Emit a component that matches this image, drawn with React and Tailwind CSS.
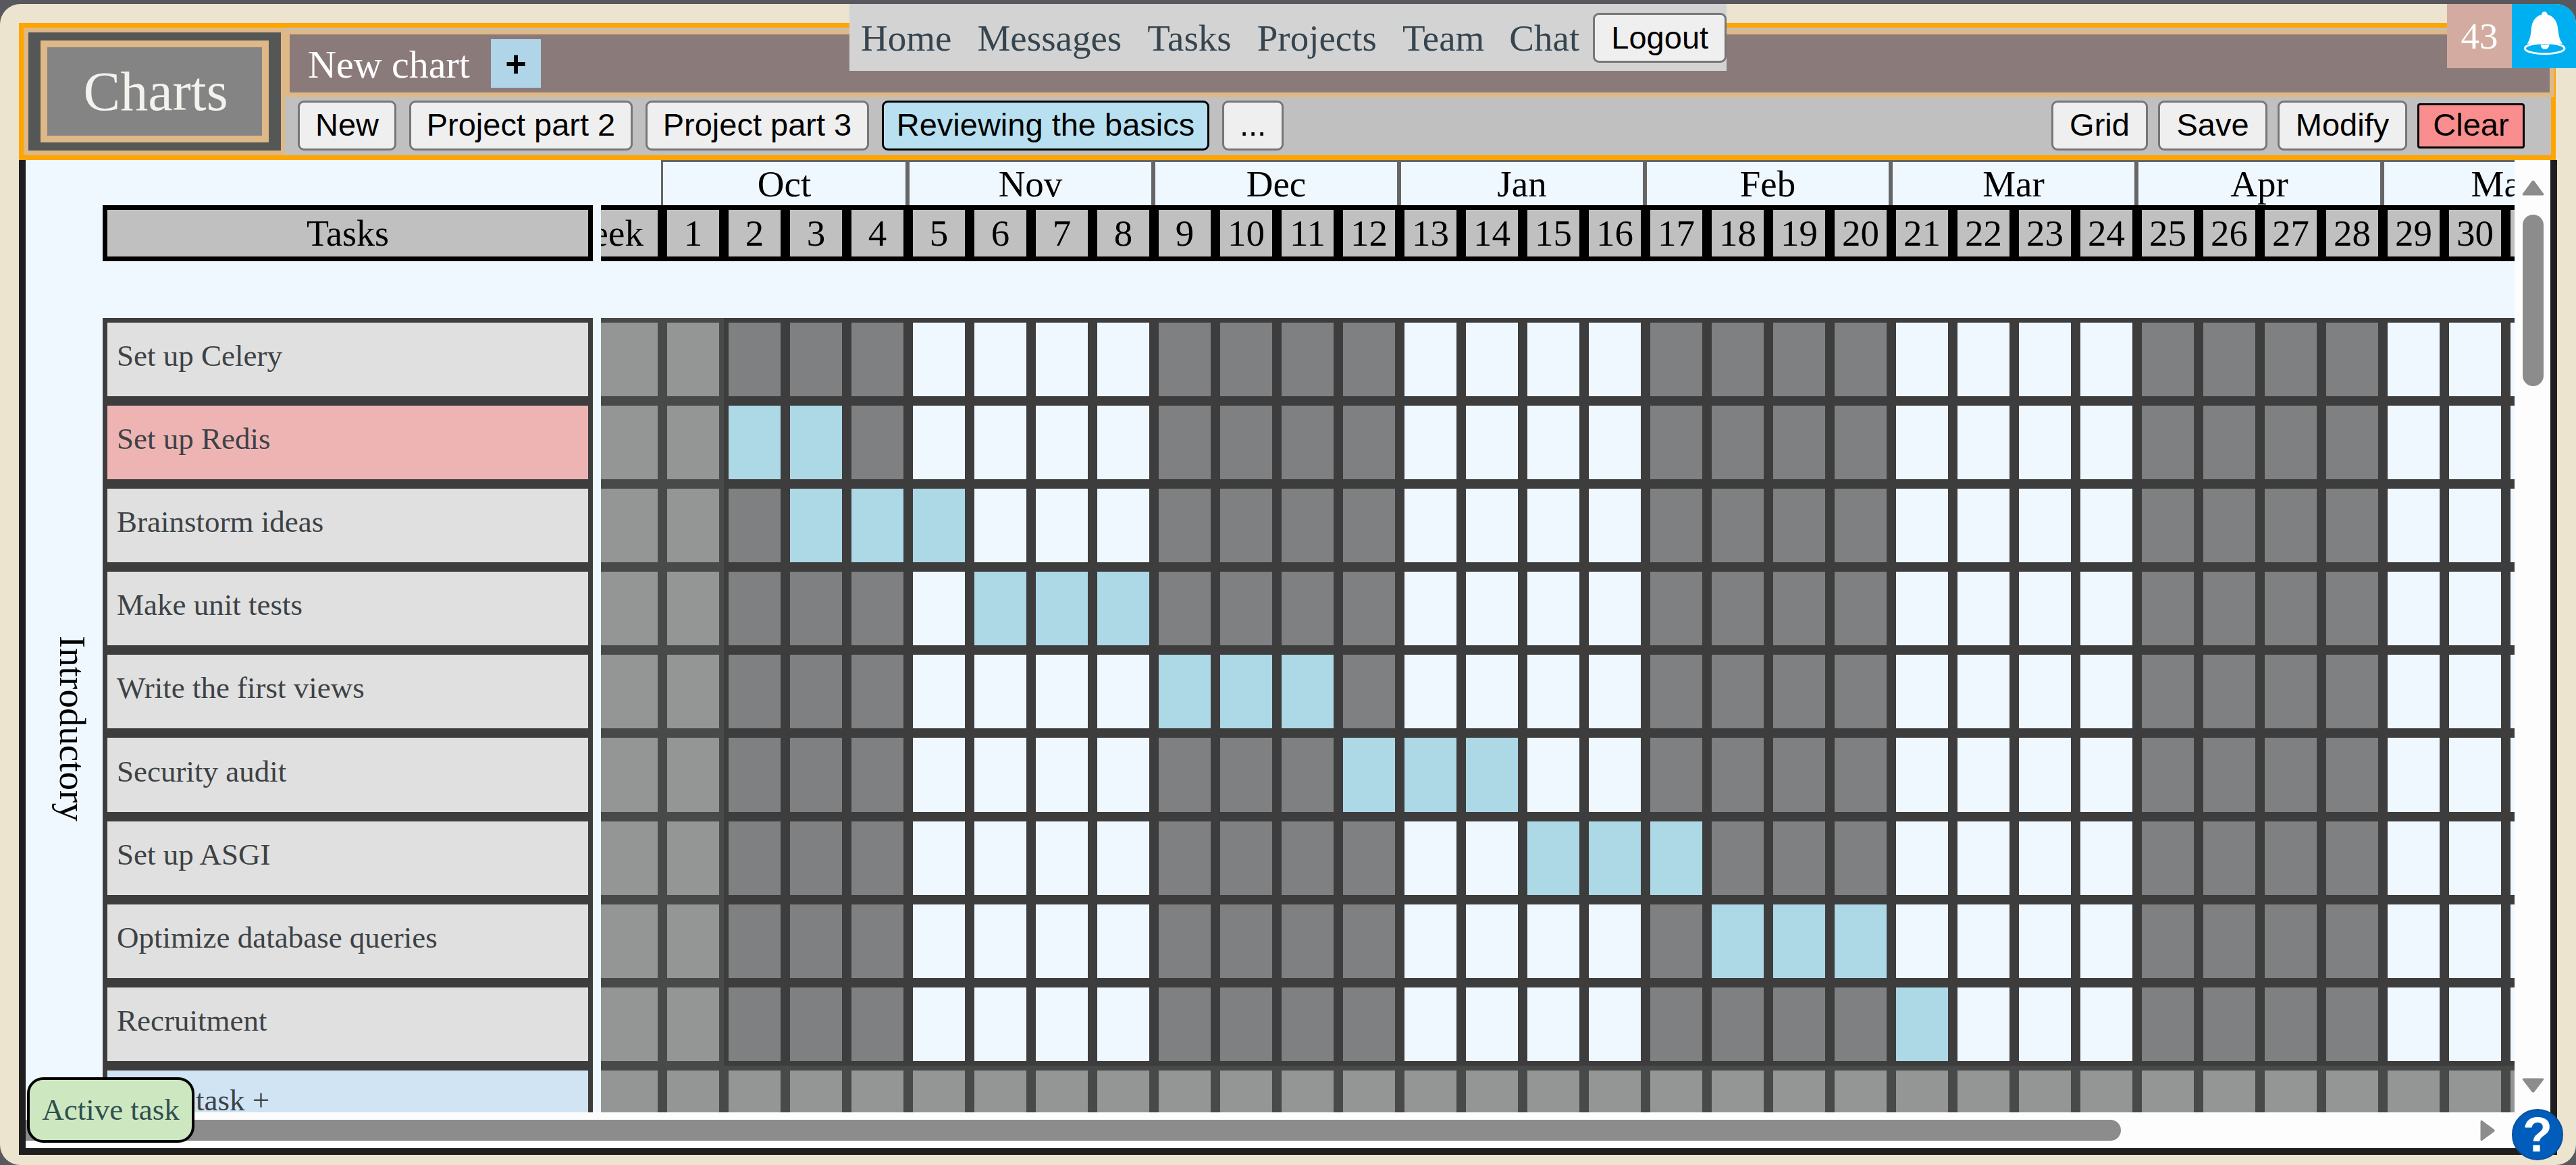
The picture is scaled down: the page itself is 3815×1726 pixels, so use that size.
const serif = "font-['Liberation_Serif',serif]";
const sans = "font-['Liberation_Sans',sans-serif]";

const months = ["Nov", "Dec", "Jan", "Feb", "Mar", "Apr", "May"];
const weeks = Array.from({ length: 31 }, (_, i) => i + 1);

const tasks = [
  { name: "Set up Celery", from: 0, to: -1 },
  { name: "Set up Redis", from: 2, to: 3, warn: true },
  { name: "Brainstorm ideas", from: 3, to: 5 },
  { name: "Make unit tests", from: 6, to: 8 },
  { name: "Write the first views", from: 9, to: 11 },
  { name: "Security audit", from: 12, to: 14 },
  { name: "Set up ASGI", from: 15, to: 17 },
  { name: "Optimize database queries", from: 18, to: 20 },
  { name: "Recruitment", from: 21, to: 21 },
];

const btnVariants = {
  plain: "h-[74px] rounded-[9px] border-[#767676] bg-[#efefef]",
  active: "h-[74px] rounded-[9px] border-black bg-[#b9e0f0]",
  danger: "h-[67px] rounded-[4px] border-black bg-[#fa8e8e]",
};

function cellClass(week, task) {
  if (week >= task.from && week <= task.to) return "bg-[#add8e6] border-[#3d3d3d]";
  if (week <= 1) return "bg-[#949595] border-[#484a49]";
  const block = Math.floor((week - 1) / 4) % 2;
  return block === 0 ? "bg-[#7f8081] border-[#3d3d3d]" : "bg-[#f0f8ff] border-[#3d3d3d]";
}

function Btn({ children, variant = "plain", className = "" }) {
  return (
    <button
      type="button"
      className={`shrink-0 border-[3.5px] pb-[3px] text-[47px] leading-none text-black ${sans} ${btnVariants[variant]} ${className}`}
    >
      {children}
    </button>
  );
}

function Arrow({ points, className }) {
  return (
    <svg viewBox="0 0 24 24" preserveAspectRatio="none" className={className}>
      <polygon points={points} fill="#8c8c8c" stroke="#8c8c8c" strokeWidth="3" strokeLinejoin="round" />
    </svg>
  );
}

function Header() {
  return (
    <header className="flex h-[203px] w-[3757px] shrink-0 border-y-[7px] border-l-[7px] border-r-[7px] border-[#ffa500] bg-[#c0c0c0]">
      <div className="w-[387px] shrink-0 bg-[#deb887] p-[7px]">
        <div className="h-[175px] w-[374px] bg-[#555756] px-[18px] py-[12px]">
          <div className={`flex h-[151px] w-[338px] items-center justify-center border-[10px] border-[#deb887] bg-[#858484] pl-[3px] text-[82px] leading-none text-[#f3f2ee] ${serif}`}>
            Charts
          </div>
        </div>
      </div>
      <div className="flex min-w-0 flex-1 flex-col pt-[3px]">
        <div className="-mr-[5px] flex h-[100px] items-center border-[7px] border-[#deb887] bg-[#8b7a7a] pl-[27px]">
          <span className={`pt-[3px] text-[58px] leading-none text-white ${serif}`}>New chart</span>
          <span className={`ml-[31px] flex h-[72px] w-[74px] items-center justify-center bg-[#b0d4e8] text-[54px] font-bold leading-none text-black ${sans}`}>+</span>
        </div>
        <div className="flex flex-1 items-center justify-between pb-[2px] pl-[19px] pr-[39px]">
          <div className="flex gap-[19px]">
            <Btn className="w-[146px]">New</Btn>
            <Btn className="w-[331px]">Project part 2</Btn>
            <Btn className="w-[331px]">Project part 3</Btn>
            <Btn variant="active" className="w-[485px]">Reviewing the basics</Btn>
            <Btn className="w-[91px]">...</Btn>
          </div>
          <div className="flex items-center gap-[15px]">
            <Btn className="w-[143px]">Grid</Btn>
            <Btn className="w-[162px]">Save</Btn>
            <Btn className="w-[192px]">Modify</Btn>
            <Btn variant="danger" className="w-[159px]">Clear</Btn>
          </div>
        </div>
      </div>
    </header>
  );
}

function TaskColumn() {
  return (
    <div className="w-[726px] shrink-0 pt-[67px]">
      <div className={`flex h-[83px] items-center justify-center border-[7px] border-black bg-[#c0c0c0] text-[54px] leading-none text-black ${serif}`}>
        Tasks
      </div>
      <div className="mt-[84px] flex flex-col">
        {tasks.map((task) => (
          <div
            key={task.name}
            className={`flex h-[123.1px] shrink-0 items-center border-[7px] border-[#3d3d3d] pb-[10px] pl-[14px] text-[45px] leading-none text-[#3d4245] ${serif} ${task.warn ? "bg-[#eeb4b4]" : "bg-[#e0e0e0]"}`}
          >
            {task.name}
          </div>
        ))}
        <div className={`flex h-[123.1px] shrink-0 items-center border-[7px] border-[#3d3d3d] bg-[#d0e4f4] pb-[20px] pl-[11px] text-[45px] leading-none text-[#3d4245] ${serif}`}>
          Add a task +
        </div>
      </div>
    </div>
  );
}

function GridArea() {
  return (
    <div className="ml-[12px] min-w-0 flex-1 overflow-hidden">
      <div className={`flex h-[67px] w-max pl-[89px] text-[55px] leading-none text-black ${serif}`}>
        <div className="flex h-[67px] w-[362px] shrink-0 items-center justify-center border-l-[3px] border-t-[3px] border-[#666666]">Oct</div>
        {months.map((month) => (
          <div
            key={month}
            className="flex h-[67px] w-[364px] shrink-0 items-center justify-center border-l-[6px] border-t-[3px] border-[#666666]"
          >
            {month}
          </div>
        ))}
      </div>
      <div className={`-ml-[95px] flex h-[83px] w-max text-[55px] leading-none text-black ${serif}`}>
        <div className="flex h-[83px] w-[186px] shrink-0 items-center justify-center border-[7px] border-black bg-[#c0c0c0] pl-[6px]">Week</div>
        {weeks.map((week) => (
          <div key={week} className="flex h-[83px] w-[91px] shrink-0 items-center justify-center border-[7px] border-black bg-[#c0c0c0]">
            {week}
          </div>
        ))}
      </div>
      <div className="mt-[84px] flex w-max -translate-x-[95px] flex-col">
        {tasks.map((task) => (
          <div key={task.name} className="flex h-[123.1px]">
            <div className={`w-[186px] shrink-0 border-[7px] ${cellClass(0, task)}`} />
            {weeks.map((week) => (
              <div key={week} className={`w-[91px] shrink-0 border-[7px] ${cellClass(week, task)}`} />
            ))}
          </div>
        ))}
        <div className="flex h-[123.1px]">
          <div className="w-[186px] shrink-0 border-[7px] border-[#484a49] bg-[#949595]" />
          {weeks.map((week) => (
            <div key={week} className="w-[91px] shrink-0 border-[7px] border-[#484a49] bg-[#949595]" />
          ))}
        </div>
      </div>
    </div>
  );
}

function Nav() {
  return (
    <nav className={`absolute left-[1258px] top-[6px] flex h-[99px] w-[1299px] items-center gap-[38px] bg-[#d3d3d3] pl-[17px] text-[55px] leading-none text-[#36454f] ${serif}`}>
      <span className="pt-[2px]">Home</span>
      <span className="pt-[2px]">Messages</span>
      <span className="pt-[2px]">Tasks</span>
      <span className="pt-[2px]">Projects</span>
      <span className="pt-[2px]">Team</span>
      <span className="-ml-[1px] pt-[2px]">Chat</span>
      <button
        type="button"
        className={`-ml-[18px] h-[74px] w-[198px] shrink-0 rounded-[9px] border-[3.5px] border-[#767676] bg-[#efefef] text-[47px] leading-none text-black ${sans}`}
      >
        Logout
      </button>
    </nav>
  );
}

function Notifications() {
  return (
    <div className="absolute right-0 top-[6px] flex h-[95px]">
      <div className={`flex w-[96px] items-center justify-center bg-[#d3aba0] text-[55px] leading-none text-white ${serif}`}>43</div>
      <div className="w-[95px] rounded-tr-[30px] bg-[#00afef]">
        <svg viewBox="660 18 285 285" className="h-[95px] w-[95px]">
          <path
            d="M805 52C797 52 793 58 792 65C766 72 751 92 747 122C744 150 744 170 728 194L885 194C868 170 868 150 864 122C860 92 845 72 819 65C817 58 813 52 805 52Z"
            fill="#fff"
          />
          <ellipse cx="806" cy="215" rx="88" ry="24" fill="#00afef" stroke="#fff" strokeWidth="9" />
          <path d="M788 198L826 198C826 212 816 219 807 219C798 219 788 212 788 198Z" fill="#fff" />
        </svg>
      </div>
    </div>
  );
}

export default function App() {
  return (
    <div className="relative h-[1726px] w-[3815px] overflow-hidden bg-[#58595e] pt-[6px]">
      <div className="flex h-[1720px] w-[3815px] flex-col rounded-[30px] bg-[#ece4cf] pl-[28px] pt-[28px]">
        <Header />
        <main className="flex h-[1474px] w-[3759px] shrink-0 flex-col border-x-[10px] border-b-[10px] border-[#1f1f1f]">
          <div className="flex h-[1411px] shrink-0">
            <div className="relative flex w-[3686px] shrink-0 overflow-hidden bg-[#f0f8ff]">
              <div className="flex w-[114px] shrink-0 items-center justify-center pl-[24px] pt-[274px]">
                <span className={`text-[55px] leading-none text-black [writing-mode:vertical-rl] ${serif}`}>Introductory</span>
              </div>
              <TaskColumn />
              <GridArea />
            </div>
            <div className="flex w-[53px] shrink-0 flex-col items-center bg-[#fdfdfd] pl-[1px] pt-[29px]">
              <Arrow points="12,3 22,21 2,21" className="h-[25px] w-[33px]" />
              <div className="mt-[27px] h-[254px] w-[31px] rounded-full bg-[#8c8c8c]" />
              <Arrow points="2,3 22,3 12,21" className="mt-auto mb-[28px] h-[24px] w-[33px]" />
            </div>
          </div>
          <div className="flex h-[53px] items-center bg-[#fdfdfd]">
            <div className="h-[31px] w-[3103px] rounded-r-full bg-[#8c8c8c]" />
            <Arrow points="3,2 21,12 3,22" className="ml-[531px] h-[32px] w-[24px]" />
          </div>
        </main>
      </div>
      <Nav />
      <Notifications />
      <div className={`absolute left-[40px] top-[1596px] flex h-[97px] w-[248px] items-center justify-center rounded-[24px] border-[4px] border-black bg-[#cde8c0] text-[45px] leading-none text-[#2f4f4f] ${serif}`}>
        Active task
      </div>
      <div className={`absolute left-[3720px] top-[1643px] flex h-[76px] w-[76px] items-center justify-center rounded-full border-[2px] border-[#0a4f9a] bg-[#005dbb] text-[72px] font-bold leading-none text-white ${sans}`}>
        ?
      </div>
    </div>
  );
}
